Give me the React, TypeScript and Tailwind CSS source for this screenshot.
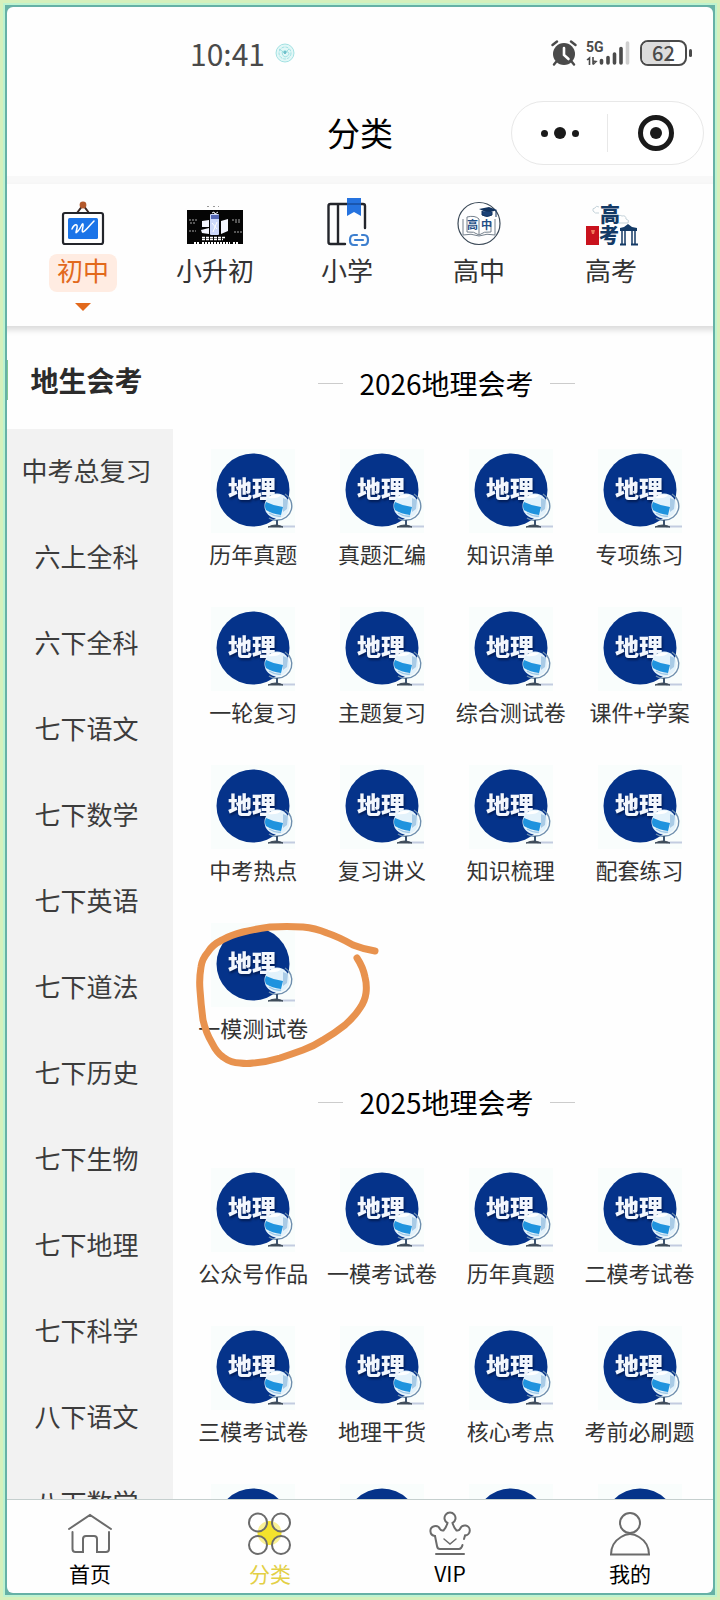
import type { ReactNode } from 'react';

const CJK = "font-['Noto_Sans_CJK_SC',sans-serif]";

const sidebar = [
  '地生会考', '中考总复习', '六上全科', '六下全科', '七下语文', '七下数学', '七下英语',
  '七下道法', '七下历史', '七下生物', '七下地理', '七下科学', '八下语文', '八下数学',
];

const sections = [
  {
    title: '2026地理会考',
    items: [
      '历年真题', '真题汇编', '知识清单', '专项练习',
      '一轮复习', '主题复习', '综合测试卷', '课件+学案',
      '中考热点', '复习讲义', '知识梳理', '配套练习',
      '一模测试卷',
    ],
  },
  {
    title: '2025地理会考',
    items: [
      '公众号作品', '一模考试卷', '历年真题', '二模考试卷',
      '三模考试卷', '地理干货', '核心考点', '考前必刷题',
      '', '', '', '',
    ],
  },
];

function BoardIcon() {
  return (
    <svg width="60" height="52" viewBox="0 0 60 52" fill="none">
      <path d="M24 15l6-8 6 8" stroke="#3a2a26" strokeWidth="2" />
      <circle cx="30" cy="7" r="3.4" fill="#b3592c" />
      <rect x="10" y="15" width="40" height="31" rx="2" fill="#fff" stroke="#23252b" strokeWidth="2.2" />
      <rect x="15" y="20" width="30" height="21" rx="1.5" fill="#1b74e8" />
      <path d="M19 31c2-5 6-6 5-1s-2 6 1 3 4-8 5-7-2 8 0 8 6-6 11-11" stroke="#fff" strokeWidth="1.5" strokeLinecap="round" />
    </svg>
  );
}

function PosterIcon() {
  return (
    <svg width="60" height="52" viewBox="0 0 60 52" fill="none">
      <path d="M22 8.500h2M28 8.500h2M33 8.500h1" stroke="#999" />
      <rect x="2" y="12" width="56" height="34" fill="#050505" />
      <path d="M17 23l7-1v7h-7zM16 32l8-2v6l-7-1zM36 23l7-2v12l-7 3z" fill="#f4f6ff" />
      <rect x="25" y="16" width="9" height="21" rx="1" fill="#cdd9fb" />
      <path d="M26 17h8v4h-8z" fill="#5568b4" />
      <path d="M27 15l2-1 1 2 3-2" stroke="#fff" />
      <path d="M27 25l5 6M32 24l-4 10" stroke="#fff" />
      <path d="M4 22h9M5 25h5M47 22h9M50 24h6M4 33h7M49 34h8" stroke="#a8a8a8" strokeDasharray="2 1" />
      <path d="M17 39.500h23M17 41.500h21" stroke="#fff" strokeWidth="1.600" strokeDasharray="3 1" />
      <path d="M9 45h6M17 45h28M48 45h5" stroke="#fff" strokeWidth="2" strokeDasharray="2 1" />
    </svg>
  );
}

function BookIcon() {
  return (
    <svg width="60" height="52" viewBox="0 0 60 52" fill="none">
      <path d="M28 46H13.500q-2 0-2-2V8q0-2 2-2H46q2 0 2 2v22" stroke="#23252b" strokeWidth="2.400" strokeLinecap="round" />
      <path d="M21 6v40" stroke="#23252b" strokeWidth="2.400" />
      <path d="M30 0h14v18l-7-4-7 4z" fill="#2673df" />
      <path d="M30 5h14v2H30z" fill="#1a56ae" />
      <path d="M40 37h-3q-4 0-4 5t4 5h3M45 37h2q4 0 4 5t-4 5h-2M38 42h8" stroke="#3d7fcf" strokeWidth="2.200" strokeLinecap="round" />
    </svg>
  );
}

function SeniorIcon() {
  return (
    <svg width="60" height="52" viewBox="0 0 60 52" fill="none">
      <circle cx="30" cy="25.500" r="21" stroke="#3c4a58" strokeWidth="1.200" />
      <path d="M14 21v16q8-2 16 1 8-3 16-1V21M18 19v15q7-1 12 3 5-4 12-3V24M18 19q8-2 12 2v16" stroke="#74808c" />
      <g className={`${CJK} font-bold`} fontSize="11" fill="#1f4e86">
        <text x="18" y="31">高</text>
        <text x="32" y="31">中</text>
      </g>
      <path d="M30 11l10-2 8 3-9 3z" fill="#12335f" />
      <path d="M33 13v4q5 3 10 0v-3M47 12v7" fill="#1b4277" stroke="#12335f" />
    </svg>
  );
}

function ExamIcon() {
  return (
    <svg width="60" height="52" viewBox="0 0 60 52" fill="none">
      <path d="M18 9q-3-2-4 1-3 0-2 3 2 3 6 2M36 20q1-4 5-2 4-1 4 3 4 1 2 4H37" stroke="#c5d3da" />
      <g className={`${CJK} font-black`} fontSize="20" fill="#143a66">
        <text x="19" y="24">高</text>
        <text x="18" y="45">考</text>
      </g>
      <rect x="5" y="28" width="13" height="19" fill="#c9121d" />
      <path d="M10 32h4l-1 4h-2z" fill="#f0795b" />
      <path d="M39 30l4-1 4-3 4 3 5 1v3H39z" fill="#143a66" />
      <path d="M41 32v14M44 32v14M51 32v14M54 32v14" stroke="#143a66" strokeWidth="1.500" />
      <path d="M39 46.500h6M50 46.500h7" stroke="#143a66" strokeWidth="2" />
    </svg>
  );
}

function GeoIcon() {
  return (
    <svg width="84" height="84" viewBox="0 0 84 84" fill="none" aria-hidden="true" className="bg-[#f9fdfc]">
      <circle cx="42" cy="41" r="36.500" fill="#05338a" />
      <text x="17" y="49" fontSize="24" fill="#f3f7fd" className={`${CJK} font-black drop-shadow-[1px_2px_1px_#021c55]`}>地理</text>
      <path d="M74 45a14 14 0 0 1-7 26q-5 1-9-2" stroke="#6f8fae" strokeWidth="1.400" />
      <path d="M66 71v6" stroke="#3c5470" strokeWidth="2" />
      <path d="M68 77.500h16" stroke="#c3cce0" strokeWidth="2" />
      <path d="M57 78q8-4 15 0z" fill="#3f4c5a" stroke="#3f4c5a" />
      <circle cx="66" cy="57" r="12.500" fill="#e3f2fb" />
      <path d="M55 53q8 4 17 5l-2 8q-9-1-15-5-2-4 0-8z" fill="#1f93de" />
      <path d="M57 49q5-5 13-3-3 4-13 3z" fill="#fff" />
      <path d="M72 49l5 2-1 9-4 3z" fill="#a9cbe6" />
      <path d="M58 64q6 4 12 3" stroke="#9fc8e6" strokeWidth="1.500" />
    </svg>
  );
}

function Scribble() {
  return (
    <svg width="190" height="150" viewBox="0 0 190 150" fill="none" aria-hidden="true" className="pointer-events-none absolute top-0 left-0 z-10 max-w-none overflow-visible">
      <path
        d="M186 28Q174 26 164 22 150 14 138 10 126 5 114 4 98 3 81 4 66 6 54 9 42 12 33 17 23 22 19 29 13 36 12 44 10 56 11 67 12 82 14 97 17 110 23 120 28 130 34 134 42 140 51 140 58 141 64 140 78 139 91 135 103 131 114 127 125 123 134 117 146 110 156 102 166 93 171 85 176 78 177 70 178 62 176 54 174 44 168 35"
        stroke="#e8924e" strokeWidth="7" strokeLinejoin="round" strokeLinecap="round"
      />
    </svg>
  );
}

const categories: { label: string; icon: ReactNode }[] = [
  { label: '初中', icon: <BoardIcon /> },
  { label: '小升初', icon: <PosterIcon /> },
  { label: '小学', icon: <BookIcon /> },
  { label: '高中', icon: <SeniorIcon /> },
  { label: '高考', icon: <ExamIcon /> },
];

const tabs: { label: string; icon: ReactNode }[] = [
  {
    label: '首页',
    icon: <path d="M1 18L22 4l21 14M4.500 21v17q0 3 3 3h7.500V28q0-3 3-3h8q3 0 3 3v13h9q3 0 3-3V21" />,
  },
  {
    label: '分类',
    icon: (
      <>
        <circle cx="21.500" cy="22" r="12" fill="#f4e22c" stroke="none" />
        <g fill="#ffffff80">
          <circle cx="10" cy="11.500" r="9" />
          <circle cx="33" cy="11.500" r="9" />
          <circle cx="10" cy="34" r="9" />
          <circle cx="33" cy="34" r="9" />
        </g>
      </>
    ),
  },
  {
    label: 'VIP',
    icon: (
      <>
        <path d="M7 25l2 10q.5 3 3 3h19q2.500 0 3.500-4M36 28l1-3.500" />
        <path d="M7 25A5 5 0 1 1 12 18q1 2 3.500 1.500Q18 17 19.500 12A5.500 5.500 0 1 1 24.500 12q1.500 5 4 7.500Q31 20 32 18A5 5 0 1 1 37 24.500" />
        <path d="M16 28l6 5 6-5" strokeWidth="1.500" />
        <path d="M8 43h28" />
      </>
    ),
  },
  {
    label: '我的',
    icon: (
      <>
        <circle cx="22" cy="12" r="10" />
        <path d="M3 43.500Q3 32 13 26q9-6 18 0 10 6 10 17.500z" />
      </>
    ),
  },
];

function StatusBar() {
  return (
    <div className="flex h-[86px] items-center pt-5 pr-7 pl-[190px] text-[#4a4a4a]">
      <span className={`${CJK} text-[30px] leading-none`}>10:41</span>
      <svg width="20" height="20" viewBox="0 0 20 20" fill="none" stroke="#8fdadc" strokeWidth=".8" className="ml-2.5">
        <circle cx="10" cy="10" r="9" fill="#e2f7f7" />
        <circle cx="10" cy="10" r="6" strokeDasharray="3 1" />
        <path d="M4 6l6 4 4-4M7 9q3-3 6 0t-3 5q-3-1-3-5z" />
        <circle cx="10" cy="9.500" r="1" stroke="#2e9bb0" />
      </svg>
      <div className="ml-auto flex items-center">
        <svg width="26" height="26" viewBox="0 0 26 26" fill="none" stroke="#4a4a4a" strokeLinecap="round">
          <circle cx="13" cy="14" r="11" fill="#4a4a4a" stroke="none" />
          <path d="M1.500 5L6 1.500M24.500 5L20 1.500M5 22l-2 2.500M21 22l2 2.500" strokeWidth="2.400" />
          <path d="M13 8v7l4.500 4" stroke="#fff" strokeWidth="2.600" />
        </svg>
        <svg width="44" height="26" viewBox="0 0 44 26" className="ml-[9px]">
          <text x="0" y="12" fontSize="14" fill="#4a4a4a" className="font-['Roboto',sans-serif] font-bold">5G</text>
          <path d="M1 20l2.500-2v7M7 17v7.500M7 21l3 .5-3 3" fill="none" stroke="#4a4a4a" strokeWidth="1.600" />
          <g stroke="#4a4a4a" strokeWidth="3.600" strokeLinecap="round">
            <path d="M15.500 20.500v2.500M22 17.500v5.500M28.500 14v9M35 8.500v14.500" />
            <path d="M41.500 3v20" stroke="#cfcfcf" />
          </g>
        </svg>
        <div className="relative ml-2.5 flex h-[26px] w-[47px] items-center justify-center rounded-lg border-2 border-[#4a4a4a] bg-white">
          <span className="absolute inset-y-0 left-0 w-7 rounded-l-md bg-[#dcdcdc]" />
          <span className={`${CJK} relative text-xl leading-5 font-medium`}>62</span>
        </div>
        <span className="ml-0.5 h-2 w-[3px] rounded-sm bg-[#4a4a4a]" />
      </div>
    </div>
  );
}

function TitleBar() {
  return (
    <div className="relative flex h-[90px] items-center justify-center pt-0.5">
      <h1 className="text-[33px] leading-none text-black">分类</h1>
      <div className="absolute top-[15px] right-4 flex h-16 w-[193px] items-center rounded-full border border-[#e8e8e8] bg-white">
        <button aria-label="更多" className="flex flex-1 items-center justify-center gap-1.5">
          <span className="size-[7px] rounded-full bg-[#1a1a1a]" />
          <span className="size-3 rounded-full bg-[#1a1a1a]" />
          <span className="size-[7px] rounded-full bg-[#1a1a1a]" />
        </button>
        <span className="h-[38px] w-px bg-[#e8e8e8]" />
        <button aria-label="关闭" className="flex flex-1 items-center justify-center">
          <span className="flex size-9 items-center justify-center rounded-full border-[5px] border-[#1a1a1a]">
            <span className="size-3 rounded-full bg-[#1a1a1a]" />
          </span>
        </button>
      </div>
    </div>
  );
}

function Section({ title, items }: { title: string; items: string[] }) {
  return (
    <section>
      <h2 className="mb-[45px] flex h-[42px] items-center justify-center gap-4 text-[28px] text-black before:h-px before:w-[25px] before:bg-[#ccc] after:h-px after:w-[25px] after:bg-[#ccc]">
        {title}
      </h2>
      <div className="grid grid-cols-4">
        {items.map((name, i) => (
          <a key={i} href="#" className="relative flex h-[158px] flex-col items-center text-[22px] whitespace-nowrap text-[#333]">
            <GeoIcon />
            <span className="mt-1 leading-8">{name}</span>
            {name === '一模测试卷' && <Scribble />}
          </a>
        ))}
      </div>
    </section>
  );
}

export default function App() {
  return (
    <div className={`${CJK} relative flex h-screen flex-col overflow-hidden bg-[#fefefe]`}>
      <header>
        <StatusBar />
        <TitleBar />
        <div className="h-2 bg-[#f8f8f8]" />
      </header>

      <nav className="relative z-10 flex h-[142px] shrink-0 bg-[#fefefe] pt-3.5 pl-[17px] shadow-[0_4px_6px_rgba(0,0,0,0.14)]">
        {categories.map((c, i) => (
          <button key={c.label} className="flex w-[132px] flex-col items-center text-[26px]">
            {c.icon}
            <span className={i === 0 ? 'mt-1 h-[38px] rounded-lg bg-[#ffece2] px-2 leading-8 text-[#e2691c]' : 'mt-1 h-[38px] px-2 leading-8 text-[#333]'}>
              {c.label}
            </span>
            {i === 0 && (
              <svg width="16" height="8" viewBox="0 0 16 8" className="mt-[11px]">
                <path d="M0 0h16L8 8z" fill="#e2691c" />
              </svg>
            )}
          </button>
        ))}
      </nav>

      <main className="flex min-h-0 flex-1 overflow-hidden">
        <aside className="w-[173px] shrink-0 bg-[#f2f2f2]">
          {sidebar.map((name, i) => (
            <button
              key={name}
              className={i === 0
                ? 'flex h-[103px] w-full items-center justify-center bg-[#fefefe] pt-1 text-[28px] font-bold text-[#2b2b2b]'
                : 'flex h-[86px] w-full items-center justify-center pb-1.5 text-[26px] text-[#3c3c3c]'}
            >
              {i === 0 && <span className="absolute left-0 h-10 w-2 bg-[#7fc796]" />}
              {name}
            </button>
          ))}
        </aside>
        <div className="flex-1 px-4 pt-9">
          {sections.map((s) => <Section key={s.title} {...s} />)}
        </div>
      </main>

      <footer className="grid h-[101px] shrink-0 grid-cols-4 border-t border-[#c5cfce] bg-[#fefefe] pt-[11px]">
        {tabs.map((t, i) => (
          <a key={t.label} href="#" className={i === 1 ? 'flex flex-col items-center text-[21px] text-[#e3cf45]' : 'flex flex-col items-center text-[21px] text-black'}>
            <svg width="44" height="46" viewBox="0 0 44 46" fill="none" stroke="#6b6b6b" strokeWidth="2" strokeLinecap="round" className="overflow-visible">
              {t.icon}
            </svg>
            <span className="leading-8">{t.label}</span>
          </a>
        ))}
      </footer>

      {/* decorative frame round the whole screen */}
      <div className="pointer-events-none absolute inset-0 z-20 border-[3px] border-[#d6f0bc]">
        <div className="h-full overflow-hidden border-2 border-[#bdf3d0]">
          <div className="h-full overflow-hidden border-2 border-[#66b1a6]">
            <div className="h-full rounded-md shadow-[0_0_0_4px_#66b1a6]" />
          </div>
        </div>
      </div>
    </div>
  );
}
